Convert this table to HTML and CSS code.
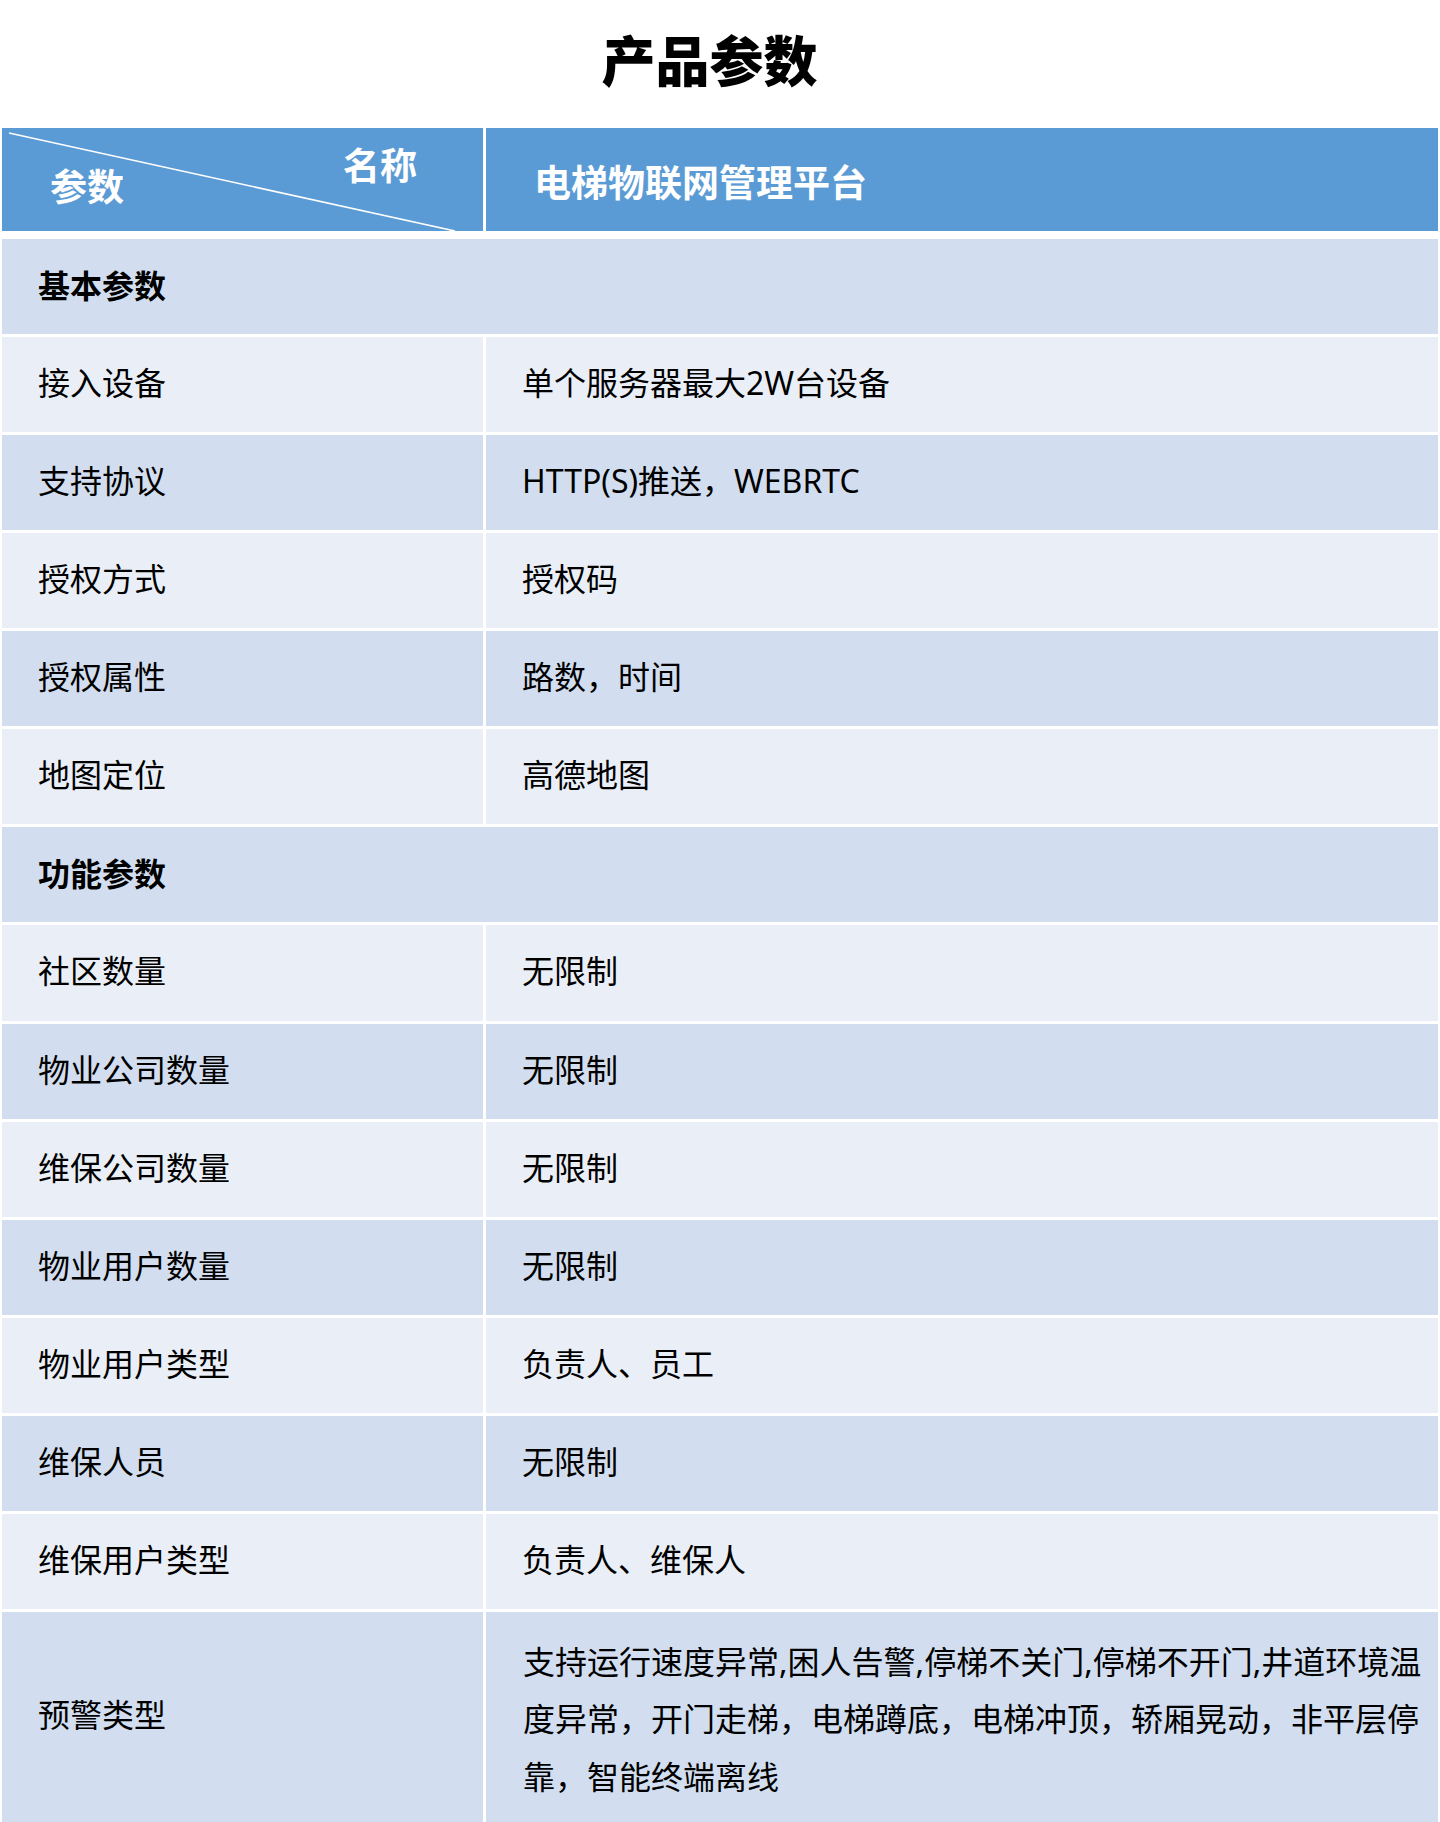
FILE: index.html
```html
<!DOCTYPE html>
<html lang="zh-CN">
<head>
<meta charset="utf-8">
<title>产品参数</title>
<link rel="stylesheet" href="styles.css">
</head>
<body>
<div class="page">
  <h1 class="title">产品参数</h1>
  <div class="grid head-row">
    <div class="head head-split">
      <svg class="diag" width="481" height="103" viewBox="0 0 481 103"><line x1="7" y1="5" x2="453" y2="103" stroke="#ffffff" stroke-width="1.6"/></svg>
      <span class="head-param">参数</span>
      <span class="head-name">名称</span>
    </div>
    <div class="head head-product">电梯物联网管理平台</div>
  </div>
  <div class="grid body-rows">
    <div class="cell section dark">基本参数</div>
    <div class="cell light">接入设备</div><div class="cell light">单个服务器最大2W台设备</div>
    <div class="cell dark">支持协议</div><div class="cell dark">HTTP(S)推送，WEBRTC</div>
    <div class="cell light">授权方式</div><div class="cell light">授权码</div>
    <div class="cell dark">授权属性</div><div class="cell dark">路数，时间</div>
    <div class="cell light">地图定位</div><div class="cell light">高德地图</div>
    <div class="cell section dark">功能参数</div>
    <div class="cell light">社区数量</div><div class="cell light">无限制</div>
    <div class="cell dark">物业公司数量</div><div class="cell dark">无限制</div>
    <div class="cell light">维保公司数量</div><div class="cell light">无限制</div>
    <div class="cell dark">物业用户数量</div><div class="cell dark">无限制</div>
    <div class="cell light">物业用户类型</div><div class="cell light">负责人、员工</div>
    <div class="cell dark">维保人员</div><div class="cell dark">无限制</div>
    <div class="cell light">维保用户类型</div><div class="cell light">负责人、维保人</div>
    <div class="cell dark">预警类型</div><div class="cell dark multi">支持运行速度异常,困人告警,停梯不关门,停梯不开门,井道环境温度异常，开门走梯，电梯蹲底，电梯冲顶，轿厢晃动，非平层停靠，智能终端离线</div>
  </div>
</div>
</body>
</html>
```
FILE: styles.css
```css
html, body {
  margin: 0;
  padding: 0;
  background: #ffffff;
}
body {
  font-family: "Noto Sans", "Noto Sans CJK SC", sans-serif;
  color: #000000;
}
.page {
  width: 1440px;
}
.title {
  margin: 0;
  height: 128px;
  box-sizing: border-box;
  padding: 0 21px 10px 0;
  display: flex;
  align-items: center;
  justify-content: center;
  font-family: "Noto Sans CJK SC", sans-serif;
  font-size: 54px;
  font-weight: 900;
  line-height: 1;
  color: #000000;
}
.grid {
  display: grid;
  grid-template-columns: 481px 952px;
  column-gap: 3px;
  margin: 0 2px;
}
.head-row {
  grid-template-rows: 103px;
  margin-bottom: 8px;
}
.head {
  background: #5b9bd5;
  color: #ffffff;
  font-family: "Noto Sans CJK SC", sans-serif;
  font-weight: 700;
  font-size: 37px;
  line-height: 37px;
}
.head-split {
  position: relative;
  display: flex;
  justify-content: space-between;
  align-items: flex-start;
  padding: 0 66px 0 48px;
}
.diag {
  position: absolute;
  left: 0;
  top: 0;
}
.head-param {
  position: relative;
  margin-top: 39px;
}
.head-name {
  position: relative;
  margin-top: 18px;
}
.head-product {
  display: flex;
  align-items: center;
  padding: 4px 0 0 48px;
}
.body-rows {
  grid-template-rows: repeat(14, 95.07px) 210px;
  row-gap: 3px;
}
.cell {
  display: flex;
  align-items: center;
  box-sizing: border-box;
  padding: 0 4px 3px 36px;
  font-size: 32px;
  line-height: 40px;
}
.section {
  grid-column: 1 / -1;
  font-weight: 700;
  font-family: "Noto Sans CJK SC", sans-serif;
  padding-bottom: 6px;
}
.dark {
  background: #d2deef;
}
.light {
  background: #eaeff7;
}
.multi {
  align-items: flex-start;
  padding: 21px 5px 0 37px;
  line-height: 57.5px;
}
```
